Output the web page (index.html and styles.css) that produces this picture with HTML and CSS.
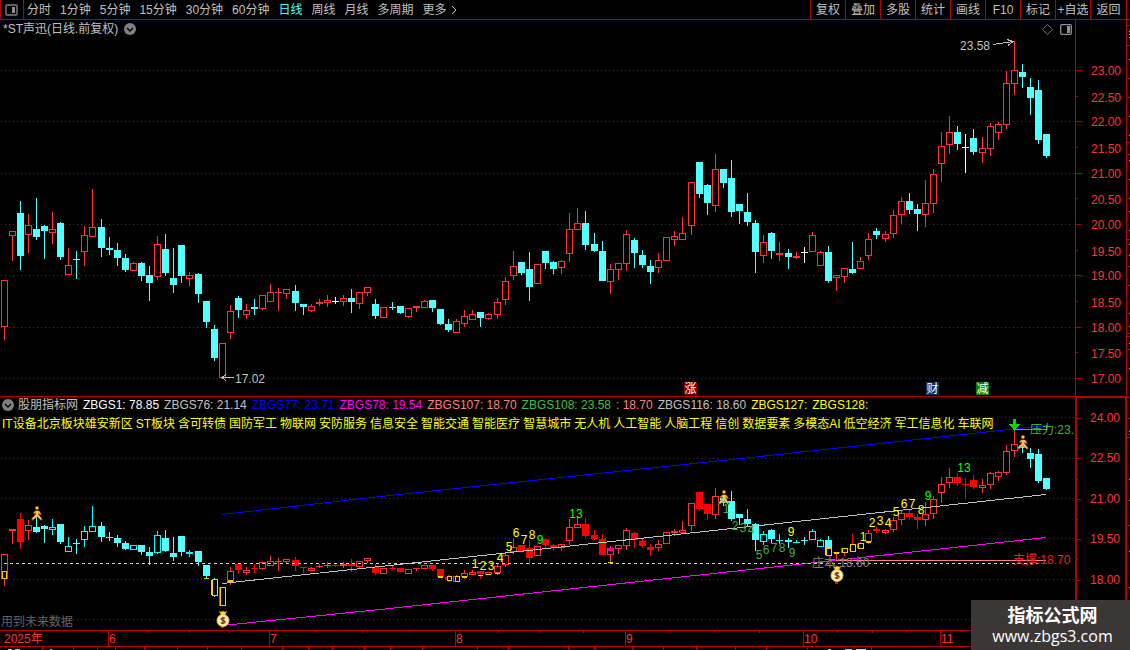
FILE: index.html
```html
<!DOCTYPE html>
<html lang="zh-CN">
<head>
    <meta charset="UTF-8">
    <meta name="viewport" content="width=device-width, initial-scale=1.0">
    <title>*ST声迅 日线</title>
    <link rel="stylesheet" href="styles.css">
</head>
<body>

    <!-- Shared icons -->
    <svg class="defs" width="0" height="0">
        <symbol id="runner" viewBox="0 0 12 15">
            <g fill="none" stroke="#7a3c10" stroke-width="2.6" stroke-linecap="round" stroke-linejoin="round">
                <path d="M6.3 5.5L6 9L1.5 13.3M6 9L10.3 13.3M3.4 7L5 5.6L8 6L9.3 8.2"/>
            </g>
            <circle cx="6" cy="2" r="2" fill="#a05a1c"/>
            <path d="M5 5H8L7.4 8.6L11 13L9.6 13.8L6.2 10.4L2 13.8L0.8 12.8L4.6 8.8Z" fill="#ffc060"/>
            <path d="M3.4 7L5 5.6L8 6L9.3 8" fill="none" stroke="#ffc060" stroke-width="1.2"/>
            <circle cx="6" cy="2" r="1.3" fill="#ffc060"/>
        </symbol>
        <symbol id="bag" viewBox="0 0 14 17">
            <path d="M3 1L5 2L7 1L9 2L11 1L9 5L5 5Z" fill="#ffe020" stroke="#8a6a00" stroke-width="0.5"/>
            <circle cx="7" cy="10.5" r="6" fill="#fff0a8" stroke="#e0c050" stroke-width="1"/>
            <path d="M9.2 8.4C8 7.4 5 7.6 5 9.2C5 10.9 9.2 10 9.2 11.9C9.2 13.6 6 13.6 4.8 12.5M7 6.8V14.2" fill="none" stroke="#703020" stroke-width="1.2"/>
        </symbol>
    </svg>

    <!-- Period tabs and tools -->
    <header class="topbar">
        <button class="layout-btn" aria-label="布局">
            <svg width="13" height="12" viewBox="0 0 13 12"><rect x="1" y="1" width="11" height="10" rx="1" fill="none" stroke="#808080" stroke-width="1.4"/><rect x="7" y="3" width="3" height="6" fill="#909090"/></svg>
        </button>
        <nav class="periods">
            <button>分时</button>
            <button>1分钟</button>
            <button>5分钟</button>
            <button>15分钟</button>
            <button>30分钟</button>
            <button>60分钟</button>
            <button class="active">日线</button>
            <button>周线</button>
            <button>月线</button>
            <button>多周期</button>
            <button class="more">更多
                <svg width="6" height="10" viewBox="0 0 6 10"><path d="M1 1L5 5L1 9" fill="none" stroke="#c0c0c0"/></svg>
            </button>
        </nav>
        <div class="tools">
            <button>复权</button>
            <button>叠加</button>
            <button>多股</button>
            <button>统计</button>
            <button>画线</button>
            <button>F10</button>
            <button>标记</button>
            <button>+自选</button>
            <button>返回</button>
        </div>
    </header>

    <main class="workspace">
        <div class="charts">
            <!-- Price chart -->
            <section class="pane price">
                <div class="plot">
                    <svg id="priceChart" class="chart"></svg>
                    <div class="pane-title">
                        <span>*ST声迅(日线.前复权)</span>
                        <svg width="12" height="12" viewBox="0 0 12 12"><circle cx="6" cy="6" r="6" fill="#808080"/><path d="M3 5L6 8L9 5" fill="none" stroke="#000" stroke-width="1.4"/></svg>
                    </div>
                    <div class="pane-tools">
                        <svg width="11" height="11" viewBox="0 0 11 11"><path d="M5.5 0.5L10.5 5.5L5.5 10.5L0.5 5.5Z" fill="none" stroke="#707070"/></svg>
                        <svg width="12" height="11" viewBox="0 0 12 11"><rect x="0.7" y="0.7" width="10.6" height="9.6" rx="1" fill="none" stroke="#909090" stroke-width="1.3"/><rect x="7" y="2" width="3" height="7" fill="#909090"/></svg>
                    </div>
                </div>
                <svg id="priceAxis" class="axis"></svg>
            </section>

            <!-- Indicator chart -->
            <section class="pane indicator">
                <div class="plot">
                    <svg id="indicatorChart" class="chart"></svg>
                    <div class="indicator-head">
                        <div class="values">
                            <svg width="12" height="12" viewBox="0 0 12 12"><circle cx="6" cy="6" r="6" fill="#808080"/><path d="M3 5L6 8L9 5" fill="none" stroke="#000" stroke-width="1.4"/></svg>
                            <span class="silver">股朋指标网</span>
                            <span class="white">ZBGS1: 78.85</span>
                            <span class="silver">ZBGS76: 21.14</span>
                            <span class="blue">ZBGS77: 23.71</span>
                            <span class="magenta">ZBGS78: 19.54</span>
                            <span class="pink">ZBGS107: 18.70</span>
                            <span class="green">ZBGS108: 23.58</span>
                            <span class="pink">: 18.70</span>
                            <span class="silver">ZBGS116: 18.60</span>
                            <span class="yellow">ZBGS127:</span>
                            <span class="yellow">ZBGS128:</span>
                        </div>
                        <ul class="sectors">
                            <li>IT设备北京板块雄安新区</li>
                            <li>ST板块</li>
                            <li>含可转债</li>
                            <li>国防军工</li>
                            <li>物联网</li>
                            <li>安防服务</li>
                            <li>信息安全</li>
                            <li>智能交通</li>
                            <li>智能医疗</li>
                            <li>智慧城市</li>
                            <li>无人机</li>
                            <li>人工智能</li>
                            <li>人脑工程</li>
                            <li>信创</li>
                            <li>数据要素</li>
                            <li>多模态AI</li>
                            <li>低空经济</li>
                            <li>军工信息化</li>
                            <li>车联网</li>
                        </ul>
                    </div>
                    <span class="future-note">用到未来数据</span>
                </div>
                <svg id="indicatorAxis" class="axis"></svg>
            </section>

            <svg id="timeAxis" class="time-axis"></svg>
        </div>
        <svg id="edge" class="edge"></svg>
    </main>

    <div class="watermark">
        <strong>指标公式网</strong>
        <span>www.zbgs3.com</span>
    </div>

    <script src="chart.js"></script>
</body>
</html>
```
FILE: styles.css
```css
* {
    box-sizing: border-box;
}
body {
    margin: 0;
    height: 100vh;
    display: flex;
    flex-direction: column;
    overflow: hidden;
    background: #000;
    color: #c0c0c0;
    font-family: "Liberation Sans", "Noto Sans CJK SC", sans-serif;
    font-size: 12px;
    line-height: 16px;
}
svg {
    display: block;
    flex-shrink: 0;
}
.defs {
    position: absolute;
}
button {
    padding: 0;
    border: 0;
    background: none;
    color: inherit;
    font: inherit;
    white-space: nowrap;
    cursor: pointer;
}

/* top bar */
.topbar {
    display: flex;
    flex-shrink: 0;
    height: 20px;
    padding-right: 3px;
    border-bottom: 1px solid #b40000;
}
.layout-btn {
    width: 24px;
    padding-left: 4px;
    border: solid #b40000;
    border-width: 0 1px;
}
.periods {
    display: flex;
    flex: 1;
    gap: 9px;
    padding-left: 3px;
}
.periods .active {
    color: #54ffff;
}
.periods .more {
    display: flex;
    align-items: center;
    gap: 4px;
}
.tools {
    display: flex;
    border-right: 1px solid #b40000;
}
.tools button {
    width: 35px;
    border-left: 1px solid #b40000;
}
.tools button:last-child {
    width: 36px;
}

/* charts */
.workspace {
    display: flex;
    flex: 1;
    min-height: 0;
}
.charts {
    display: flex;
    flex-direction: column;
    flex: 1;
    min-width: 0;
    border-right: 1px solid #b40000;
}
.pane {
    display: flex;
    min-height: 0;
}
.price {
    flex: 377;
    border-bottom: 1px solid #b40000;
}
.indicator {
    flex: 233;
}
.plot {
    position: relative;
    flex: 1;
    min-width: 0;
    overflow: hidden;
}
.chart {
    width: 100%;
    height: 100%;
}
.axis {
    width: 51px;
    height: 100%;
    border-left: 1px solid #b40000;
}
.indicator .axis {
    border: solid #b40000;
    border-width: 1px 1px 0 2px;
}
.time-axis {
    width: 100%;
    height: 20px;
}
.edge {
    width: 3px;
    height: 100%;
}
text {
    font-family: "Liberation Sans", "Noto Sans CJK SC", sans-serif;
    font-size: 12px;
}
.pane-title {
    position: absolute;
    top: 1px;
    left: 3px;
    display: flex;
    align-items: center;
    gap: 6px;
}
.pane-tools {
    position: absolute;
    top: 4px;
    right: 3px;
    display: flex;
    gap: 7px;
}
.indicator-head {
    position: absolute;
    top: 0;
    left: 2px;
    white-space: nowrap;
}
.values {
    display: flex;
    align-items: center;
    gap: 5px;
}
.values svg {
    margin-right: -1px;
}
.sectors {
    display: flex;
    gap: 3px;
    margin: 3px 0 0;
    padding: 0;
    list-style: none;
    color: #ffff00;
}
.future-note {
    position: absolute;
    left: 1px;
    bottom: 0;
    color: #646464;
}
.white { color: #ffffff; }
.silver { color: #c0c0c0; }
.blue { color: #0000ff; }
.magenta { color: #ff00ff; }
.pink { color: #ff8080; }
.green { color: #40c040; }
.yellow { color: #ffff00; }

/* watermark */
.watermark {
    position: fixed;
    right: 0;
    bottom: 0;
    width: 159px;
    height: 50px;
    padding: 3px 0 0 4px;
    display: flex;
    flex-direction: column;
    align-items: center;
    background: #3c3737;
    color: #fff;
}
.watermark strong {
    font: bold 18px/22px "Noto Sans CJK SC", sans-serif;
}
.watermark span {
    font: 16px/22px "Open Sans", sans-serif;
}
```
FILE: chart.js
```javascript
const RED = '#ff3232';
const FULL_RED = '#ff0000';
const CYAN = '#54ffff';
const LINE = '#b40000';
const GOLD = '#ffc800';

// x, high, body top, body bottom, low, kind (r = up, c = down, w = flat)
const candles = `
4 280 280 327 340 r|12 231 231 236 261 r|20 201 213 256 270 c|28 214 225 235 253 r|36 198 229 237 240 c
44 225 226 231 259 c|52 212 229 233 244 r|60 222 223 257 260 c|68 248 265 275 275 r|76 251 259 260 279 c
84 226 235 252 266 r|92 189 227 237 237 r|101 219 227 248 257 c|109 237 248 250 255 c|117 243 250 258 266 c
125 254 258 270 272 c|133 262 263 271 271 r|141 262 263 276 281 c|149 266 275 283 301 c|157 236 244 277 280 r
165 234 249 273 276 c|173 248 278 285 293 c|181 245 245 276 283 c|189 272 275 279 286 r|198 273 274 294 303 c
206 301 301 322 328 c|214 325 329 358 361 c|222 343 343 378 378 r|230 305 311 333 339 r|238 296 298 310 318 c
246 304 310 315 319 r|254 299 307 309 315 c|262 295 295 309 310 r|270 284 292 302 302 r|278 288 292 293 311 r
286 289 289 294 299 r|295 285 291 303 311 c|303 304 304 307 315 c|311 304 306 311 312 r|319 299 302 304 306 r
327 295 300 303 307 r|335 297 301 302 304 w|343 295 298 302 306 r|351 289 298 302 313 c|359 292 292 304 309 r
367 287 287 293 296 r|375 299 304 316 319 c|383 307 307 318 318 r|392 302 307 308 310 c|400 306 306 313 314 c
408 308 308 317 318 r|416 306 306 308 312 r|424 300 301 308 308 r|432 300 300 308 312 c|440 309 309 324 325 c
448 319 324 330 332 c|456 319 321 333 333 r|464 310 316 324 327 r|472 310 314 320 320 r|480 312 312 318 327 c
488 313 314 319 320 r|497 298 302 315 319 r|505 277 281 300 305 r|513 251 266 276 280 r|521 262 262 273 275 c
529 252 269 287 301 c|537 264 264 284 284 r|545 251 251 263 269 c|553 261 262 269 274 c|561 260 261 268 274 r
569 213 229 254 262 r|577 208 223 230 230 r|585 211 223 245 250 c|594 233 244 251 252 c|602 241 251 281 281 c
610 264 269 282 294 r|618 263 263 270 280 r|626 230 234 264 271 r|634 238 240 253 268 c|642 250 255 265 268 c
650 260 266 272 284 c|658 253 260 268 273 r|666 237 237 261 261 r|674 231 236 240 246 r|682 217 233 240 240 r
691 182 182 226 235 r|699 162 162 194 198 c|707 184 185 203 215 c|715 154 169 206 212 r|723 169 169 183 188 c
731 160 178 212 217 c|739 204 204 211 224 c|747 193 212 222 226 c|755 220 223 252 273 c|763 235 242 256 263 r
771 232 233 251 259 c|779 242 253 255 261 r|788 249 253 257 269 c|796 252 256 258 259 r|804 247 252 253 263 w
812 232 235 252 252 r|820 251 252 266 266 r|828 246 252 281 283 c|836 275 275 278 291 r|844 268 268 277 283 r
852 242 269 273 274 c|860 257 261 269 269 r|868 233 239 256 260 r|876 228 231 235 239 c|885 231 234 239 242 r
893 210 215 234 238 r|901 197 201 215 224 r|909 193 201 210 214 c|917 204 209 214 231 c|925 180 203 215 227 r
933 169 174 204 213 r|941 132 146 164 182 r|949 116 132 145 154 r|957 126 132 144 150 c|965 134 147 148 173 w
973 129 138 152 155 c|982 137 148 153 163 r|990 123 126 149 156 r|998 122 124 133 140 r|1006 71 83 125 129 r
1014 41 70 84 95 r|1022 64 72 77 88 c|1030 78 87 98 115 c|1038 80 90 140 144 c|1046 134 134 156 158 c
`.trim().split(/[|\n]/).map(row => {
    const p = row.split(' ');
    return { x: +p[0], h: +p[1], t: +p[2], b: +p[3], l: +p[4], kind: p[5] };
});

function rect(x, y, w, h, color) {
    return `<rect x="${x}" y="${y}" width="${w}" height="${h}" fill="${color}"/>`;
}
function box(x, y, w, h, color) {
    return `<rect x="${x + 0.5}" y="${y + 0.5}" width="${w - 1}" height="${h - 1}" fill="#000" stroke="${color}"/>`;
}
function label(x, y, str, color, anchor) {
    return `<text x="${x}" y="${y}" fill="${color}" text-anchor="${anchor || 'start'}">${str}</text>`;
}
function path(d, color, width) {
    return `<path d="${d}" fill="none" stroke="${color}" stroke-width="${width || 1}"/>`;
}
function grid(rows) {
    return rows.map(y => `<line x1="1" y1="${y + 0.5}" x2="3000" y2="${y + 0.5}" stroke="${LINE}" stroke-dasharray="1 3"/>`).join('');
}
function candle(c, wickColor, hollow) {
    const height = Math.max(c.b - c.t, 1);
    let out = rect(c.x, c.h, 1, Math.max(c.l - c.h, 1), wickColor);
    if (hollow && height > 2) {
        out += box(c.x - 3, c.t, 7, height, wickColor);
    } else {
        out += rect(c.x - 3, c.t, 7, height, wickColor);
    }
    return out;
}
// top is the page row where the pane starts
function draw(id, top, content) {
    document.getElementById(id).innerHTML =
        `<g transform="translate(0 ${-top})" shape-rendering="crispEdges">${content}</g>`;
}

// ---------- price chart ----------
let out = grid([70, 121, 173, 224, 275, 327, 378]);
candles.forEach(c => {
    const color = { r: RED, c: CYAN, w: '#ffffff' }[c.kind];
    out += candle(c, color, c.kind === 'r');
});
out += label(960, 50, '23.58', '#c0c0c0');
out += path('M993 44.5L1013 41.5M1007 39.5L1013 41.5L1008 45.5', '#c0c0c0');
out += label(235, 383, '17.02', '#c0c0c0');
out += path('M222 377.5H234M226 374L222 377.5L226 381', '#c0c0c0');
[[684, '涨', '#800000'], [926, '财', '#003366'], [976, '减', '#008000']].forEach(m => {
    out += rect(m[0], 382, 13, 13, m[2]) + label(m[0] + 6.5, 393, m[1], '#ffffff', 'middle');
});
draw('priceChart', 20, out);

out = '';
for (let i = 0; i <= 12; i++) {
    const y = Math.round(70 + i * 25.67);
    out += rect(0, y, i % 2 ? 2 : 5, 1, LINE);
    out += label(45, y + (i % 2 ? 6 : 5), (23 - i * 0.5).toFixed(2), RED, 'end');
}
draw('priceAxis', 20, out);

// ---------- indicator chart ----------
const toLower = y => Math.round(444.25 + (y - 70.5) * 0.525);

out = grid([417, 458, 498, 538, 579, 619]);
candles.forEach((c, i) => {
    const low = { x: c.x, h: toLower(c.h), t: toLower(c.t), b: toLower(c.b), l: toLower(c.l) };
    const n = i + 1;
    const cool = (n >= 5 && n <= 27) || (n >= 90 && n <= 103) || n >= 127;
    const hollow = c.kind === 'r';
    const color = cool ? (hollow ? '#00ffff' : CYAN) : (hollow ? RED : FULL_RED);
    out += candle(low, color, hollow);
});

// gold parts below the cost line: x, y, width, height
[[2, 571, 5, 8], [212, 579, 6, 17], [220, 587, 6, 19], [447, 576, 5, 5], [455, 576, 5, 6],
 [826, 548, 6, 8], [842, 548, 6, 5], [850, 544, 6, 8], [858, 543, 6, 6]].forEach(g => {
    out += box(g[0], g[1], g[2], g[3], GOLD);
});
[[204, 578, 1], [228, 580, 3], [438, 576, 2], [462, 576, 2], [478, 575, 1], [486, 574, 1],
 [495, 573, 1], [608, 562, 1], [834, 552, 2], [866, 541, 2]].forEach(g => {
    out += rect(g[0], g[1], 5, g[2], GOLD);
});
out += rect(608, 548, 6, 3, '#ff0096');

out += path('M222 514.5L380 496.5L760 456.5L1046 425.5', '#0000ff');
out += path('M222 583.5L380 566.5L760 525.5L1046 494.5', '#c0c0c0');
out += path('M222 625.5L380 609.5L760 568.5L1046 537.5', '#ff00ff');
out += `<line x1="4" y1="563.5" x2="1046" y2="563.5" stroke="#d0d0d0" stroke-dasharray="3 3"/>`;
out += path('M836 560.5H1046', '#ff8080');
out += path('M1014 429.5H1046V425', '#40c040');

// countdown numbers
const YELLOW = '#ffff00', LIME = '#00ff00', GREEN = '#40b040';
[[475, 568, 1, YELLOW], [483, 570, 2, YELLOW], [491, 570, 3, YELLOW], [500, 562, 4, YELLOW],
 [509, 551, 5, YELLOW], [516, 537, 6, YELLOW], [524, 544, 7, YELLOW], [532, 539, 8, YELLOW],
 [540, 544, 9, LIME], [576, 518, 13, LIME],
 [726, 513, 1, GREEN], [735, 530, 2, GREEN], [743, 532, 3, GREEN], [751, 534, 4, GREEN],
 [759, 559, 5, GREEN], [766, 554, 6, GREEN], [774, 552, 7, GREEN], [782, 552, 8, GREEN],
 [792, 557, 9, GREEN], [791, 536, 9, YELLOW],
 [863, 541, 1, YELLOW], [872, 527, 2, YELLOW], [880, 525, 3, YELLOW], [888, 527, 4, YELLOW],
 [896, 516, 5, YELLOW], [904, 508, 6, YELLOW], [912, 508, 7, YELLOW], [921, 514, 8, YELLOW],
 [928, 500, 9, LIME], [964, 472, 13, LIME]].forEach(t => {
    out += label(t[0], t[1], t[2], t[3], 'middle');
});

out += label(1030, 434, '压力:23.', GREEN);
out += label(1013, 564, '支撑:18.70', '#f02020');
out += label(812, 567, '庄本:18.60', '#808080');
out += '<path d="M1013 419H1016V424H1020L1014.5 431L1009 424H1013Z" fill="#00dc00"/>';
out += rect(221, 625, 3, 3, FULL_RED) + rect(835, 581, 3, 3, FULL_RED);
[[31, 506], [718, 490], [1017, 435]].forEach(p => {
    out += `<use href="#runner" x="${p[0]}" y="${p[1]}" width="12" height="15" shape-rendering="auto"/>`;
});
[[216, 610], [830, 565]].forEach(p => {
    out += `<use href="#bag" x="${p[0]}" y="${p[1]}" width="14" height="17" shape-rendering="auto"/>`;
});
draw('indicatorChart', 397, out);

out = '';
for (let i = 0; i <= 10; i++) {
    const y = Math.round(417 + i * 20.2);
    out += rect(0, y, i % 2 ? 1 : 4, 1, LINE);
    if (i % 2 === 0 && i < 9) {
        out += label(43, y + 4, (24 - i * 0.75).toFixed(2), RED, 'end');
    }
}
draw('indicatorAxis', 397, out);

// ---------- time axis ----------
out = rect(0, 630, 3000, 1, LINE) + rect(0, 646, 3000, 1, LINE);
out += label(4, 643, '2025年', RED);
[[108, 6], [269, 7], [455, 8], [625, 9], [803, 10], [940, 11]].forEach(m => {
    out += rect(m[0], 631, 1, 15, LINE) + label(m[0] + 1, 643, m[1], RED);
});
[148, 189, 229, 316, 362, 409, 498, 540, 583, 670, 714, 759, 837, 872, 906].forEach(x => {
    out += rect(x, 631, 1, 2, LINE);
});
[17, 42, 73, 97, 115, 144, 177, 207, 241, 282, 308, 332, 364, 390, 422, 477, 508, 568, 594, 632, 663, 696, 735, 766, 807, 871].forEach(x => {
    out += rect(x, 647, 1, 3, LINE);
});
out += rect(8, 649, 4, 1, '#c0c0c0') + rect(15, 649, 5, 1, '#c0c0c0') + rect(50, 649, 2, 1, '#c0c0c0');
out += rect(828, 649, 3, 1, CYAN) + rect(845, 649, 7, 1, CYAN) + rect(856, 649, 10, 1, CYAN);
draw('timeAxis', 630, out);

// ---------- right edge ----------
out = '';
[25, 45, 142, 239, 336, 397, 437].forEach(y => { out += rect(0, y, 3, 1, LINE); });
[31, 34, 37, 59, 78, 97, 116, 135, 154, 160, 179, 198, 211, 230, 244, 255, 266, 285, 313, 326, 333, 343, 349, 368, 418, 431, 434, 479, 500, 525, 551, 587].forEach(y => {
    out += rect(2, y, 1, 1, '#c0c0c0');
});
draw('edge', 20, out);
```
